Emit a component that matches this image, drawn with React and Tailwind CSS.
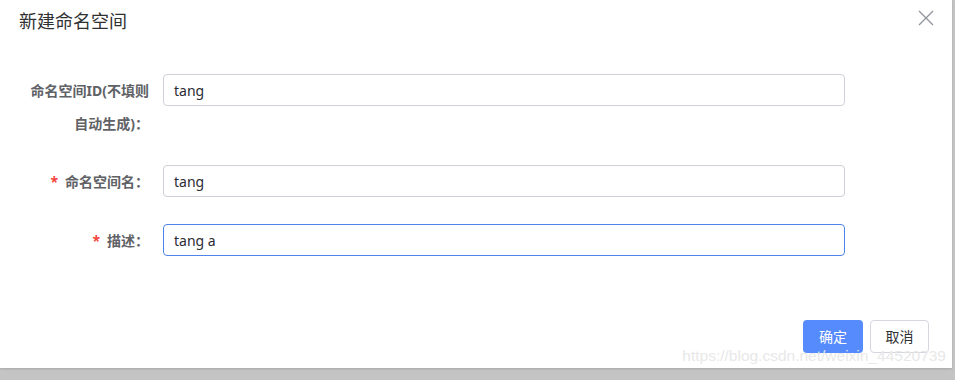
import React from 'react';

const fontStack = '"Noto Sans", "Noto Sans CJK SC", sans-serif';

const Field = ({ label, lines, required, value, focused, className }) => (
  <div className={`flex items-start ${className || ''}`}>
    <label className="w-[150px] pr-[1px] text-right text-[14px] font-bold leading-[33px] text-[#606266]">
      {required && <span className="mr-[7px] text-[#f5453b]">*</span>}
      {lines
        ? lines.map((l) => (
            <span key={l} className="block">
              {l}
            </span>
          ))
        : label}
    </label>
    <div
      className={`ml-[13px] flex h-[32px] w-[682px] items-center rounded-[4px] border bg-white px-[10px] text-[14px] text-[#2b2b33] ${
        focused ? 'border-[#4f84ea]' : 'border-[#cfcfd8]'
      }`}
    >
      {value}
    </div>
  </div>
);

export default function App() {
  return (
    <div
      className="relative h-[380px] w-[955px] overflow-hidden bg-[#c4c4c4]"
      style={{ fontFamily: fontStack }}
    >
      <div className="relative flex h-[368px] w-[952px] flex-col bg-white shadow-[0_1px_2px_rgba(0,0,0,0.15)]">
        <div className="flex items-start justify-between pl-[19px] pr-[18px] pt-[6px]">
          <h2 className="text-[18px] leading-[30px] text-[#303133]">新建命名空间</h2>
          <button type="button" className="mt-[4px] text-[#909399]" aria-label="close">
            <svg width="16" height="16" viewBox="0 0 16 16" fill="none" stroke="currentColor" strokeWidth="1.3">
              <path d="M1 1L15 15M15 1L1 15" />
            </svg>
          </button>
        </div>

        <div className="mt-[38px] flex flex-col">
          <Field lines={['命名空间ID(不填则', '自动生成)：']} value="tang" />
          <Field className="mt-[25px]" required label="命名空间名：" value="tang" />
          <Field className="mt-[26px]" required label="描述：" value="tang a" focused />
        </div>

        <div className="mt-auto flex justify-end gap-[7px] pb-[15px] pr-[23px]">
          <button
            type="button"
            className="h-[33px] w-[60px] rounded-[4px] bg-[#568bfd] text-[14px] text-white"
          >
            确定
          </button>
          <button
            type="button"
            className="h-[33px] w-[59px] rounded-[4px] border border-[#d6d6de] bg-white text-[14px] text-[#303133]"
          >
            取消
          </button>
        </div>

        <span
          className="pointer-events-none absolute bottom-[0px] right-[6px] text-[15.5px] leading-[24px] text-[#e8e8e8]"
          style={{ fontFamily: '"Liberation Sans", Arial, sans-serif' }}
        >
          https://blog.csdn.net/weixin_44520739
        </span>
      </div>
    </div>
  );
}
